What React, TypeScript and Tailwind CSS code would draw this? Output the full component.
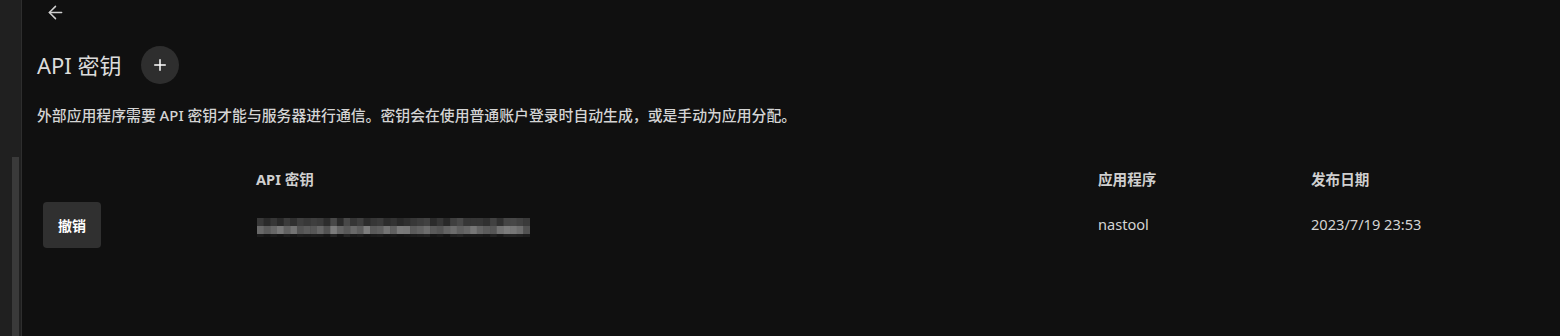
import React from 'react';
import { ArrowLeft, Plus } from 'lucide-react';

const font = { fontFamily: '"Noto Sans", "Noto Sans CJK SC", sans-serif' };

// pseudo random greys for the blurred key
const mosaic = (() => {
  let s = 7;
  const rnd = () => {
    s = (s * 9301 + 49297) % 233280;
    return s / 233280;
  };
  const top: number[] = [];
  const bottom: number[] = [];
  for (let i = 0; i < 41; i++) {
    top.push(Math.round(38 + rnd() * 36));
    bottom.push(Math.round(80 + rnd() * 45));
  }
  return { top, bottom };
})();

const grey = (v: number) => `rgb(${v},${v},${v})`;

function BlurredKey() {
  const w = 273 / 41;
  return (
    <svg width="273" height="20" viewBox="0 0 273 20" className="block">
      {mosaic.top.map((v, i) => (
        <rect key={'t' + i} x={i * w} y={0} width={w + 0.5} height={8} fill={grey(v)} />
      ))}
      {mosaic.bottom.map((v, i) => (
        <rect key={'b' + i} x={i * w} y={8} width={w + 0.5} height={8} fill={grey(v)} />
      ))}
      {mosaic.top.map((v, i) => (
        <rect key={'f' + i} x={i * w} y={16} width={w + 0.5} height={3} fill={grey(Math.round(v * 0.5))} />
      ))}
    </svg>
  );
}

export default function App() {
  return (
    <div className="flex h-[336px] w-full bg-[#101010] overflow-hidden" style={font}>
      {/* left rail with scrollbar */}
      <div className="relative w-[22px] shrink-0 bg-[#202020] border-r border-[#2e2e2e]">
        <div className="absolute left-[12px] top-[157px] bottom-0 w-[7px] bg-[#3a3a3a]" />
      </div>

      <div className="flex-1 flex flex-col pl-[15px]">
        <button className="w-[36px] h-[24px] ml-0 flex items-center justify-center text-[#d0d0d0]">
          <ArrowLeft size={21} strokeWidth={1.7} />
        </button>

        <div className="flex items-center mt-[21px] h-[40px]">
          <h1 className="text-[22px] font-normal text-[#dcdcdc] leading-none">API 密钥</h1>
          <button className="ml-[19px] w-[38px] h-[38px] rounded-full bg-[#2e2e2e] flex items-center justify-center text-white">
            <Plus size={18} strokeWidth={2} />
          </button>
        </div>

        <p className="mt-[19px] text-[14.85px] font-medium text-[#d4d4d4] leading-[22px]">
          外部应用程序需要 API 密钥才能与服务器进行通信。密钥会在使用普通账户登录时自动生成，或是手动为应用分配。
        </p>

        <div className="mt-[42px] grid grid-cols-[219px_842px_213px_1fr] text-[14.6px]">
          <div />
          <div className="font-bold text-[#cfcfcf] leading-[22px]">API 密钥</div>
          <div className="font-bold text-[#cfcfcf] leading-[22px]">应用程序</div>
          <div className="font-bold text-[#cfcfcf] leading-[22px]">发布日期</div>

          <div className="pt-[12px] pl-[6px]">
            <button className="w-[58px] h-[46px] rounded-[4px] bg-[#303030] text-white font-bold text-[14px]">
              撤销
            </button>
          </div>
          <div className="pt-[12px] flex items-center pl-[1px]">
            <div className="mt-[6px]"><BlurredKey /></div>
          </div>
          <div className="pt-[12px] flex items-center text-[#d4d4d4]">nastool</div>
          <div className="pt-[12px] flex items-center text-[#d4d4d4]">2023/7/19 23:53</div>
        </div>
      </div>
    </div>
  );
}
